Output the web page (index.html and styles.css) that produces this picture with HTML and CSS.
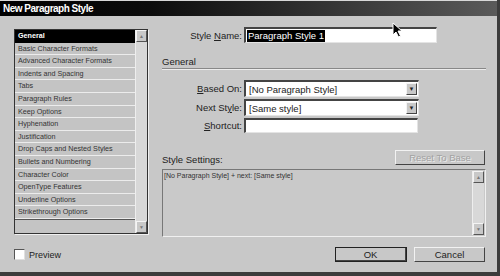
FILE: index.html
```html
<!DOCTYPE html>
<html lang="en">
  <head>
    <meta charset="UTF-8">
    <title>New Paragraph Style</title>
    <link rel="stylesheet" href="styles.css">
  </head>
  <body>
    <div class="dialog">
      <div class="titlebar">New Paragraph Style</div>

      <div class="content">
        <div class="side">
          <div class="list">
            <div class="list-items">
              <ul>
                <li class="active">General</li>
                <li>Basic Character Formats</li>
                <li>Advanced Character Formats</li>
                <li>Indents and Spacing</li>
                <li>Tabs</li>
                <li>Paragraph Rules</li>
                <li>Keep Options</li>
                <li>Hyphenation</li>
                <li>Justification</li>
                <li>Drop Caps and Nested Styles</li>
                <li>Bullets and Numbering</li>
                <li>Character Color</li>
                <li>OpenType Features</li>
                <li>Underline Options</li>
                <li>Strikethrough Options</li>
              </ul>
            </div>
            <div class="vscroll">
              <span class="sbtn">&#9650;</span>
              <span class="sbtn">&#9660;</span>
            </div>
          </div>
          <label class="check"><span class="box"></span>Preview</label>
        </div>

        <div class="main">
          <div class="row">
            <span class="lbl">Style <u>N</u>ame:</span>
            <span class="field name"><span class="sel">Paragraph Style 1</span></span>
          </div>

          <div class="section-title">General</div>

          <div class="fields">
            <div class="row">
              <span class="lbl"><u>B</u>ased On:</span>
              <span class="field select"><span class="val">[No Paragraph Style]</span><span class="arrow">&#9660;</span></span>
            </div>
            <div class="row">
              <span class="lbl">Next St<u>y</u>le:</span>
              <span class="field select"><span class="val">[Same style]</span><span class="arrow">&#9660;</span></span>
            </div>
            <div class="row">
              <span class="lbl"><u>S</u>hortcut:</span>
              <span class="field shortcut"></span>
            </div>
          </div>

          <div class="settings-head">
            <span>Style Settings:</span>
            <button class="btn reset" disabled>Reset To Base</button>
          </div>
          <div class="settings">
            <div class="settings-text">[No Paragraph Style] + next: [Same style]</div>
            <div class="vscroll">
              <span class="sbtn">&#9650;</span>
              <span class="sbtn">&#9660;</span>
            </div>
          </div>

          <div class="actions">
            <button class="btn ok">OK</button>
            <button class="btn cancel">Cancel</button>
          </div>
        </div>
      </div>

      <svg class="cursor" width="12" height="16" viewBox="0 0 12 16">
        <path d="M1 1 L1 13 L4 10 L6.5 15 L8.5 14 L6 9 L10 9 Z" fill="#000" stroke="#fff" stroke-width="1"/>
      </svg>
    </div>
  </body>
</html>
```

FILE: styles.css
```css
* {
  box-sizing: border-box;
}
html, body {
  margin: 0;
  padding: 0;
}
body {
  width: 500px;
  height: 276px;
  overflow: hidden;
  background: #c6c6c6;
  font-family: "Liberation Sans", Arial, sans-serif;
  font-size: 9.5px;
  color: #222;
}
.dialog {
  position: relative;
  width: 500px;
  height: 276px;
  border-right: 3px solid #3c3c3c;
  border-bottom: 4px solid #3c3c3c;
  background: #c8c8c8;
}
.titlebar {
  height: 16px;
  border-top: 1px solid #d8d8d8;
  padding: 2px 0 0 3px;
  background: linear-gradient(to right, #000 0%, #0c0c0c 30%, #5a5a5a 100%);
  color: #fff;
  font-weight: bold;
  font-size: 10px;
  letter-spacing: -0.5px;
  line-height: 12px;
}
.content {
  display: flex;
  gap: 14px;
  padding: 11px 0 0 14px;
}

/* category list */
.side {
  width: 134px;
  padding-top: 2px;
}
.list {
  display: flex;
  height: 205px;
  border: 1px solid #333;
  box-shadow: 1px 1px 0 #f0f0f0;
  background: #c4c4c4;
}
.list-items {
  flex: 1;
}
.list ul {
  list-style: none;
  margin: 0;
  padding: 0;
  border-bottom: 1px solid #555;
  font-size: 7.2px;
  color: #333;
}
.list li {
  height: 12.6px;
  line-height: 11.6px;
  padding-left: 3px;
  border-bottom: 1px solid #ececec;
  white-space: nowrap;
}
.list li.active {
  background: #000;
  color: #fff;
  font-weight: bold;
  border-bottom-color: #000;
}
.vscroll {
  width: 12px;
  display: flex;
  flex-direction: column;
  justify-content: space-between;
  background: #d8d8d8;
  border-left: 1px solid #eee;
}
.sbtn {
  display: block;
  height: 12px;
  background: #c8c8c8;
  border-top: 1px solid #f4f4f4;
  border-left: 1px solid #f4f4f4;
  border-right: 1px solid #555;
  border-bottom: 1px solid #555;
  color: #777;
  font-size: 5px;
  line-height: 10px;
  text-align: center;
}
.check {
  display: flex;
  align-items: center;
  gap: 4px;
  margin-top: 15px;
  font-size: 9px;
  color: #222;
}
.check .box {
  width: 11px;
  height: 11px;
  background: #fff;
  border-top: 1px solid #555;
  border-left: 1px solid #555;
  border-right: 1px solid #e0e0e0;
  border-bottom: 1px solid #e0e0e0;
}

/* right panel */
.main {
  width: 324px;
  display: flex;
  flex-direction: column;
}
.row {
  display: flex;
  align-items: center;
}
.lbl {
  width: 80px;
  margin-right: 2px;
  text-align: right;
  white-space: nowrap;
}
.field {
  display: flex;
  align-items: center;
  height: 16px;
  background: #fff;
  border-top: 2px solid #444;
  border-left: 2px solid #444;
  border-right: 1px solid #e4e4e4;
  border-bottom: 1px solid #e4e4e4;
}
.field.name {
  width: 193px;
  padding-left: 1px;
}
.sel {
  background: #000;
  color: #fff;
  line-height: 12px;
  padding: 0 1px;
}
.section-title {
  margin-top: 13px;
  line-height: 12px;
  border-bottom: 1px solid #888;
  box-shadow: 0 1px 0 #ececec;
}
.fields {
  display: flex;
  flex-direction: column;
  gap: 2px;
  margin-top: 11px;
}
.field.select {
  width: 175px;
  height: 17px;
}
.field.select .val {
  flex: 1;
  padding-left: 3px;
}
.arrow {
  width: 11px;
  height: 12px;
  margin-right: 1px;
  background: #c8c8c8;
  border-top: 1px solid #f4f4f4;
  border-left: 1px solid #f4f4f4;
  border-right: 1px solid #444;
  border-bottom: 1px solid #444;
  color: #222;
  font-size: 6px;
  line-height: 10px;
  text-align: center;
}
.field.shortcut {
  width: 174px;
  height: 15px;
}
.settings-head {
  display: flex;
  justify-content: space-between;
  align-items: flex-end;
  margin-top: 17px;
  padding-right: 1px;
}
.btn {
  height: 15px;
  padding: 0;
  background: #c8c8c8;
  border-top: 1px solid #f2f2f2;
  border-left: 1px solid #f2f2f2;
  border-right: 1px solid #444;
  border-bottom: 1px solid #444;
  font-family: "Liberation Sans", Arial, sans-serif;
  font-size: 9.5px;
  color: #222;
}
.btn.reset {
  width: 90px;
  color: #a2a2a2;
  text-shadow: 1px 1px 0 #ececec;
}
.settings {
  display: flex;
  height: 68px;
  margin-top: 4px;
  background: #c9c9c9;
  border-top: 1px solid #777;
  border-left: 1px solid #777;
  border-right: 1px solid #f0f0f0;
  border-bottom: 1px solid #f0f0f0;
}
.settings-text {
  flex: 1;
  padding: 2px 0 0 1px;
  font-size: 7px;
  color: #333;
}
.settings .vscroll {
  margin: 1px 1px 1px 0;
}
.actions {
  display: flex;
  justify-content: flex-end;
  gap: 7px;
  margin-top: 10px;
  padding-right: 1px;
}
.btn.ok {
  width: 72px;
  outline: 1px solid #222;
  outline-offset: -1px;
  border-right-width: 2px;
  border-bottom-width: 2px;
}
.btn.cancel {
  width: 71px;
}
.cursor {
  position: absolute;
  left: 392px;
  top: 22px;
}
```
